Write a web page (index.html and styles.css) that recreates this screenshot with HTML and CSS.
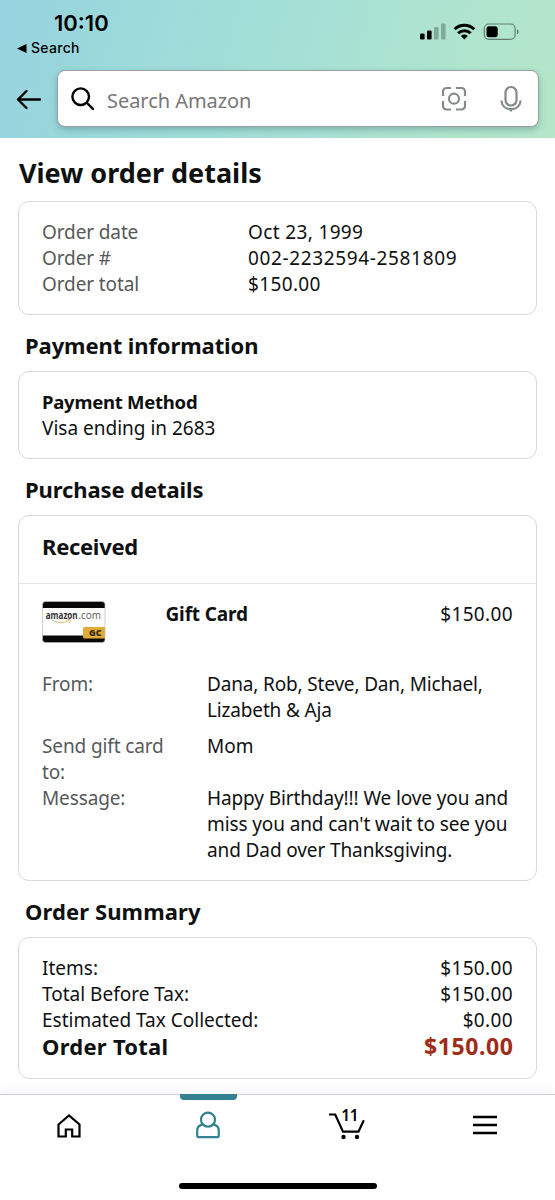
FILE: index.html
```html
<!DOCTYPE html>
<html lang="en">
<head>
<meta charset="utf-8">
<title>View order details</title>
<link rel="stylesheet" href="styles.css">
</head>
<body>
<header class="header">
  <div class="status">
    <div class="clock-group">
      <div class="clock">10:10</div>
      <div class="return"><svg width="10" height="9" viewBox="0 0 10 9"><path d="M0 4.5 9.5 0v9z"/></svg><span>Search</span></div>
    </div>
    <svg class="status-icons" width="102" height="20" viewBox="0 0 102 20">
      <rect x="1" y="11.5" width="4.6" height="6" rx="1.3"/>
      <rect x="8" y="8.5" width="4.6" height="9" rx="1.3"/>
      <g opacity=".25"><rect x="15" y="5" width="4.6" height="12.5" rx="1.3"/><rect x="22" y="1.5" width="4.6" height="16" rx="1.3"/></g>
      <g fill="none" stroke="#000" stroke-width="3"><path d="M35.6 7.3a14 14 0 0 1 19.6 0M39.1 11.2a9 9 0 0 1 12.6 0"/></g>
      <path d="M45.4 17.4 41.9 14a5 5 0 0 1 7 0z"/>
      <rect x="65.3" y="2" width="30.8" height="15.3" rx="4.5" fill="none" stroke="#000" stroke-opacity=".45" stroke-width="1.2"/>
      <rect x="67.5" y="4.2" width="11.2" height="11" rx="2.5"/>
      <path d="M98 7.2c2 .8 2 4.2 0 5z" opacity=".5"/>
    </svg>
  </div>
  <div class="search-row">
    <svg class="back" width="26" height="22" viewBox="0 0 26 22"><path d="M24 11.500H2M10.500 3 2 11.500l8.500 8.500" fill="none" stroke="#000" stroke-width="2.4" stroke-linecap="round" stroke-linejoin="round"/></svg>
    <div class="search">
      <svg class="glass" width="24" height="24" viewBox="0 0 24 24"><g fill="none" stroke="#000" stroke-width="2.4" stroke-linecap="round"><circle cx="9.7" cy="9.7" r="8.3"/><path d="m16 16 6 6"/></g></svg>
      <span class="placeholder">Search Amazon</span>
      <svg class="scan" width="26" height="26" viewBox="0 0 26 26"><g fill="none" stroke="#848989" stroke-width="2.2"><path d="M2 10V5.5A3.5 3.5 0 0 1 5.500 2H10M15 2h5.500A3.500 3.500 0 0 1 24 5.500V10M24 15v5a3.500 3.500 0 0 1-3.500 3.500H15M10 23.500H5.500A3.500 3.500 0 0 1 2 20v-5"/><circle cx="13" cy="12.700" r="5"/></g></svg>
      <svg class="mic" width="22" height="28" viewBox="0 0 22 28"><g fill="none" stroke="#848989" stroke-width="2.2"><rect x="5.500" y="2" width="11" height="18.500" rx="5.500"/><path d="M1.400 15.500c.4 5.500 4.500 8.700 9.600 8.700s9.200-3.200 9.600-8.700M11 24v2.500"/></g></svg>
    </div>
  </div>
</header>

<main class="page">
  <h1 class="title"><span>View order details</span></h1>
  <section class="card overview">
    <div class="row"><span class="label">Order date</span><span class="value">Oct 23, 1999</span></div>
    <div class="row"><span class="label">Order #</span><span class="value order-id">002-2232594-2581809</span></div>
    <div class="row"><span class="label">Order total</span><span class="value">$150.00</span></div>
  </section>

  <h2 class="heading payment-heading">Payment information</h2>
  <section class="card payment">
    <strong class="method">Payment Method</strong>
    <div class="visa">Visa ending in 2683</div>
  </section>

  <h2 class="heading purchase-heading">Purchase details</h2>
  <section class="card purchase">
    <h3 class="received">Received</h3>
    <div class="item">
      <svg class="gift" width="64" height="42" viewBox="0 0 64 42">
        <defs><clipPath id="card-shape"><rect x=".5" y=".5" width="62.500" height="41" rx="3"/></clipPath></defs>
        <g clip-path="url(#card-shape)">
          <rect width="64" height="42" fill="#fff"/>
          <rect width="64" height="7" fill="#080808"/>
          <rect y="34.500" width="64" height="7.500" fill="#080808"/>
          <rect x="41" y="26" width="23" height="11.500" rx="1.500" fill="#dfac35"/>
        </g>
        <rect x=".5" y=".5" width="62.500" height="41" rx="3" fill="none" stroke="#bbb" stroke-width=".7"/>
        <text x="3.700" y="17.500" class="brand brand-strong" textLength="32" lengthAdjust="spacingAndGlyphs">amazon</text>
        <text x="36.500" y="17.500" class="brand" textLength="22.500" lengthAdjust="spacingAndGlyphs">.com</text>
        <path d="M10 19q8 5 17 .5M25 18l3.500 1-1.500 3" fill="none" stroke="#e4b477"/>
        <text x="47" y="35" class="gc" textLength="12.500" lengthAdjust="spacingAndGlyphs">GC</text>
      </svg>
      <strong class="item-name">Gift Card</strong>
      <span class="price">$150.00</span>
    </div>
    <div class="facts">
      <span class="label">From:</span><span class="from">Dana, Rob, Steve, Dan, Michael,<br>Lizabeth &amp; Aja</span>
      <span class="label send">Send gift card<br>to:</span><span class="send">Mom</span>
      <span class="label">Message:</span><span class="message">Happy Birthday!!! We love you and<br>miss you and can't wait to see you<br>and Dad over Thanksgiving.</span>
    </div>
  </section>

  <h2 class="heading summary-heading">Order Summary</h2>
  <section class="card summary">
    <div class="line"><span>Items:</span><span class="price">$150.00</span></div>
    <div class="line"><span>Total Before Tax:</span><span class="price">$150.00</span></div>
    <div class="line"><span>Estimated Tax Collected:</span><span class="price">$0.00</span></div>
    <div class="line total"><span>Order Total</span><span class="sum">$150.00</span></div>
  </section>
</main>

<nav class="tabs">
  <div class="tab"><svg width="24" height="24" viewBox="0 0 24 24"><path d="M1.500 10.500 12 1.500l10.500 9V22.500h-7.300v-7H8.800v7H1.500z" fill="none" stroke="#000" stroke-width="2.200"/></svg></div>
  <div class="tab active"><svg width="24" height="28" viewBox="0 0 24 28"><g fill="none" stroke="#348191" stroke-width="2.200"><circle cx="12" cy="8.700" r="7"/><path d="M6.800 13.300C3.300 14 1.200 16.500 1.200 19.500v4.900q0 1.700 1.700 1.700h18.200q1.700 0 1.700-1.700v-4.900c0-3-2.100-5.500-5.600-6.200"/></g></svg></div>
  <div class="tab cart"><svg width="36" height="34" viewBox="0 -2 36 34"><path d="M0 6.500h6.200L14 23.700h15.500l5.300-11.500" fill="none" stroke="#000" stroke-width="2.200"/><circle cx="14.500" cy="29" r="2.200"/><circle cx="28" cy="29" r="2.200"/><text x="12.300" y="12.500" class="count">11</text></svg></div>
  <div class="tab menu"><svg width="24" height="20" viewBox="0 0 24 20"><path d="M0 2h24M0 10h24M0 18h24" stroke="#000" stroke-width="2.300"/></svg></div>
  <div class="home-bar"></div>
</nav>
</body>
</html>
```
FILE: styles.css
```css
* { box-sizing: border-box; }
body {
  margin: 0;
  width: 555px;
  height: 1200px;
  overflow: hidden;
  background: #fff;
  color: #0f1111;
  font: 19px/26px "Noto Sans", sans-serif;
  letter-spacing: 0;
}
svg { display: block; flex: none; overflow: visible; }
.header {
  height: 138px;
  background: linear-gradient(105deg, #96d3df 0%, #a2dfd7 45%, #ace3d1 70%, #b5e6c9 100%);
  color: #000;
}
.status { display: flex; justify-content: space-between; height: 70px; padding: 11px 34px 0 17px; }
.clock { padding-left: 37px; font: 600 22px/24px Inter, sans-serif; letter-spacing: 0; }
.return { display: flex; align-items: center; gap: 4px; margin-top: 4px; font: 500 14px/18px Inter, sans-serif; letter-spacing: .3px; }
.status-icons { margin-top: 11px; }
.search-row { display: flex; align-items: center; padding: 0 16px 0 16px; gap: 15px; }
.search {
  flex: 1;
  display: flex;
  align-items: center;
  height: 57px;
  padding: 0 16px 0 13px;
  background: #fff;
  border: 1px solid #9a9ea0;
  border-radius: 8px;
  box-shadow: 0 3px 6px rgba(40, 90, 90, .3);
}
.placeholder { margin: 5px auto 0 12px; color: #777; font-size: 20px; letter-spacing: -.05px; }
.mic { margin-left: 33px; }

.page { display: flex; flex-direction: column; padding: 0 18px; }
.title { height: 63px; margin: 0; padding: 17px 0 0 1px; font-size: 27px; line-height: 36px; letter-spacing: 0; }
.card { flex: none; border: 1.500px solid #d8dada; border-radius: 11px; padding: 17px 23px; }
.label { color: #565959; letter-spacing: -.12px; }
.value, .price { letter-spacing: .36px; }
.overview { height: 114px; }
.row { display: grid; grid-template-columns: 206px 1fr; }
.order-id { letter-spacing: .64px; }
.heading { height: 56px; margin: 0; padding: 14px 7px 0; font-size: 22px; line-height: 32px; letter-spacing: -.1px; }
.payment { height: 88px; }
.method { display: block; font-size: 18.500px; letter-spacing: -.25px; }
.purchase { height: 366px; padding: 0; }
.received { height: 68px; margin: 0; padding: 14px 23px; border-bottom: 1.500px solid #e4e6e6; font-size: 22px; line-height: 32px; letter-spacing: -.3px; }
.item { display: grid; grid-template-columns: 123.500px 1fr auto; padding: 17px 23px 0; height: 87px; }
.item-name { letter-spacing: -.15px; }
.brand { font: 10px "Open Sans", sans-serif; letter-spacing: 0; fill: #555; }
.brand-strong { font-weight: 700; fill: #333; }
.gc { font: 800 9px "Open Sans", sans-serif; letter-spacing: 0; fill: #332703; }
.facts { display: grid; grid-template-columns: 165px 1fr; padding: 0 0 0 23px; white-space: nowrap; }
.from { letter-spacing: -.16px; }
.message { letter-spacing: -.11px; }
.send { margin-top: 10px; }
.summary { height: 142px; }
.summary-heading { letter-spacing: .1px; }
.line { display: flex; justify-content: space-between; }
.total { font-size: 22px; font-weight: 700; letter-spacing: .25px; line-height: 26px; }
.sum { color: #a02b16; font-size: 23px; letter-spacing: .6px; margin-right: -.5px; }

.tabs {
  position: absolute;
  left: 0;
  top: 1094px;
  width: 555px;
  height: 106px;
  display: grid;
  grid-template-columns: repeat(4, 1fr);
  border-top: 1px solid #ccced3;
  background: #fff;
  box-shadow: 0 -3px 10px rgba(40, 40, 80, .06);
}
.tab { display: flex; justify-content: center; padding-top: 19px; }
.active { position: relative; padding-top: 16px; }
.active::before { content: ""; position: absolute; left: 41px; top: -1px; width: 57px; height: 6px; background: #348191; border-radius: 0 0 4px 4px; }
.cart { padding: 11px 0 0 0; }
.menu { padding: 20px 1px 0 0; }
.count { font: 600 15.5px "Noto Sans", sans-serif; letter-spacing: -.3px; }
.home-bar { position: absolute; left: 179px; top: 88px; width: 198px; height: 6px; border-radius: 3px; background: #000; }
```
